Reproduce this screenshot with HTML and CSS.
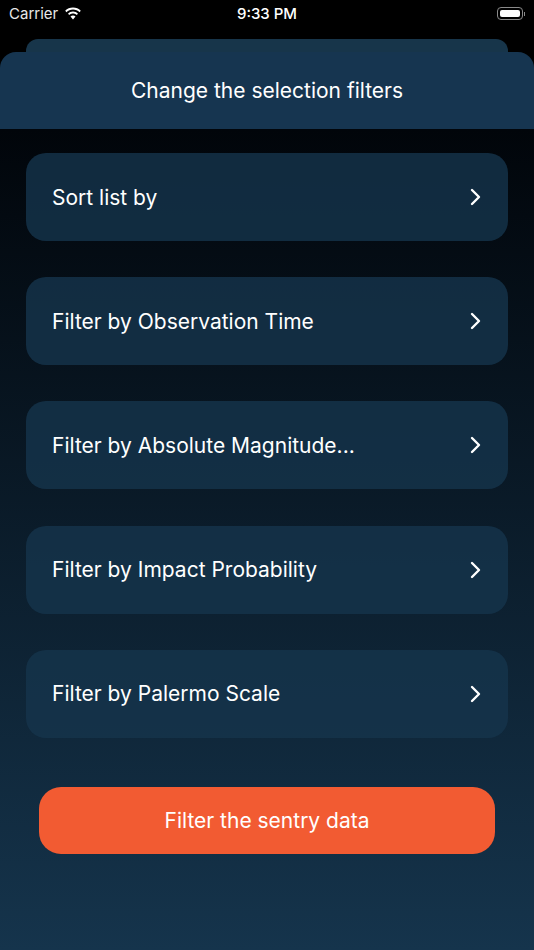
FILE: index.html
```html
<!DOCTYPE html>
<html lang="en">
<head>
    <meta charset="UTF-8">
    <meta name="viewport" content="width=device-width, initial-scale=1.0">
    <title>Change the selection filters</title>
    <link rel="stylesheet" href="styles.css">
</head>
<body>
    <div class="status-bar">
        <div class="status-left">
            <span>Carrier</span>
            <svg class="wifi" width="18" height="13" viewBox="0 0 18 13">
                <path fill="#fff" d="M9 2.6c2.5 0 4.8 1 6.5 2.6l1.3-1.4C14.800 1.800 12 .6 9 .6S3.200 1.800 1.200 3.800l1.300 1.400C4.200 3.600 6.500 2.600 9 2.600z"/>
                <path fill="#fff" d="M9 6.600c1.400 0 2.700.5 3.700 1.500l1.300-1.400C12.700 5.400 10.900 4.600 9 4.600s-3.700.8-5 2.100l1.300 1.400c1-1 2.300-1.500 3.700-1.500z"/>
                <path fill="#fff" d="M9 8.600c-1 0-1.900.4-2.500.9L9 12.400l2.500-2.900c-.6-.5-1.500-.9-2.500-.9z"/>
            </svg>
        </div>
        <div class="status-time">9:33 PM</div>
        <div class="battery">
            <div class="battery-body"><div class="battery-fill"></div></div>
            <div class="battery-cap"></div>
        </div>
    </div>

    <div class="sheet-behind"></div>
    <header class="sheet-header">Change the selection filters</header>

    <main class="content">
        <div class="filter-row">
            <span>Sort list by</span>
            <svg class="chevron" width="12" height="18" viewBox="0 0 12 18"><path d="M2 2l7 7-7 7"/></svg>
        </div>
        <div class="filter-row">
            <span>Filter by Observation Time</span>
            <svg class="chevron" width="12" height="18" viewBox="0 0 12 18"><path d="M2 2l7 7-7 7"/></svg>
        </div>
        <div class="filter-row">
            <span>Filter by Absolute Magnitude...</span>
            <svg class="chevron" width="12" height="18" viewBox="0 0 12 18"><path d="M2 2l7 7-7 7"/></svg>
        </div>
        <div class="filter-row">
            <span>Filter by Impact Probability</span>
            <svg class="chevron" width="12" height="18" viewBox="0 0 12 18"><path d="M2 2l7 7-7 7"/></svg>
        </div>
        <div class="filter-row">
            <span>Filter by Palermo Scale</span>
            <svg class="chevron" width="12" height="18" viewBox="0 0 12 18"><path d="M2 2l7 7-7 7"/></svg>
        </div>
        <button class="submit">Filter the sentry data</button>
    </main>
</body>
</html>
```

FILE: styles.css
```css
html, body {
    margin: 0;
    height: 100%;
}

body {
    width: 534px;
    height: 950px;
    overflow: hidden;
    background: #000;
    color: #fff;
    font-family: Inter, "Liberation Sans", sans-serif;
    display: flex;
    flex-direction: column;
}

.status-bar {
    height: 39px;
    padding: 0 9px;
    position: relative;
    display: flex;
    justify-content: space-between;
    align-items: flex-start;
    box-sizing: border-box;
    font-size: 15px;
}

.status-left {
    display: flex;
    align-items: center;
    gap: 6px;
    height: 27px;
    color: #e8e8e8;
}

.status-time {
    position: absolute;
    left: 0;
    right: 0;
    top: 0;
    line-height: 28px;
    text-align: center;
    font-weight: 500;
}

.battery {
    display: flex;
    align-items: center;
    height: 27px;
    gap: 1px;
}

.battery-body {
    width: 26px;
    height: 13px;
    box-sizing: border-box;
    padding: 2px;
    border: 1px solid #8a8a8a;
    border-radius: 4px;
}

.battery-fill {
    height: 100%;
    background: #fff;
    border-radius: 2px;
}

.battery-cap {
    width: 1px;
    height: 4px;
    background: #8a8a8a;
}

.sheet-behind {
    height: 13px;
    margin: 0 26px;
    background: #17354a;
    border-radius: 12px 12px 0 0;
}

.sheet-header {
    height: 77px;
    flex-shrink: 0;
    display: flex;
    align-items: center;
    justify-content: center;
    background: #163550;
    border-radius: 16px 16px 0 0;
    font-size: 21px;
}

.content {
    flex: 1;
    padding: 24px 26px 0;
    display: flex;
    flex-direction: column;
    gap: 36.2px;
    background: linear-gradient(#01050a, #15344c);
}

.filter-row {
    height: 88px;
    flex-shrink: 0;
    padding: 0 26px;
    display: flex;
    align-items: center;
    justify-content: space-between;
    box-sizing: border-box;
    background: rgba(21, 52, 76, 0.8);
    border-radius: 20px;
    font-size: 21px;
}

.chevron {
    fill: none;
    stroke: #fff;
    stroke-width: 2.4;
    stroke-linecap: round;
    stroke-linejoin: round;
}

.submit {
    height: 67px;
    margin: 13px 13px 0;
    flex-shrink: 0;
    border: 0;
    border-radius: 22px;
    background: #f25b32;
    color: #fff;
    font-family: inherit;
    font-size: 21px;
}
```
